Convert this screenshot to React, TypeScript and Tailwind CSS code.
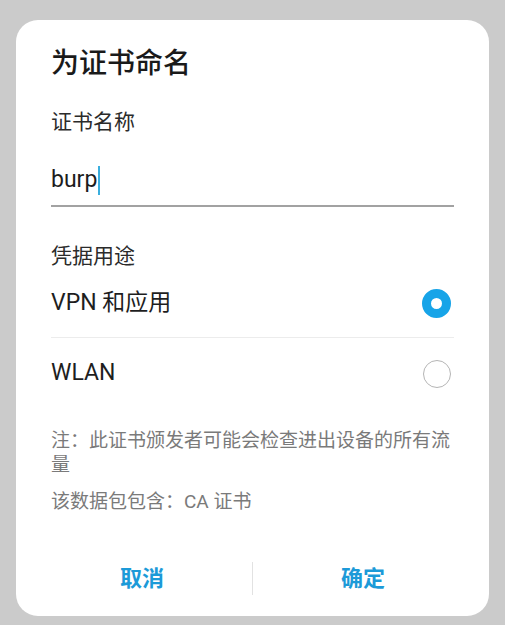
import { useState } from "react";

const font = "font-['Roboto','Noto_Sans_CJK_SC',sans-serif]";

const usages = [
    { id: "vpn", label: "VPN 和应用" },
    { id: "wlan", label: "WLAN" },
];

function Radio({ checked }: { checked: boolean }) {
    return checked ? (
        <span className="block w-[29px] h-[29px] rounded-full border-[9px] border-[#17a4e8] bg-white" />
    ) : (
        <span className="block w-[28px] h-[28px] rounded-full border-[1.5px] border-[#b5b5b5] bg-white" />
    );
}

export default function App() {
    const [usage, setUsage] = useState("vpn");

    return (
        <div className={`h-[625px] w-[505px] bg-[#cbcbcb] pt-[20px] px-[16px] ${font}`}>
            <div className="bg-white rounded-[22px] pb-[10px]">
                <div className="px-[35px] pt-[26px]">
                    <h1 className="text-[28px] leading-[36px] font-medium text-[#1a1a1a]">为证书命名</h1>

                    <p className="mt-[26px] text-[21px] leading-[28px] text-[#2b2b2b]">证书名称</p>

                    <div className="mt-[24px] h-[47px] pb-[5px] border-b-2 border-[#a2a2a2] flex items-center">
                        <span className="text-[23px] leading-[40px] text-[#1c1c1c]">burp</span>
                        <span className="ml-[1px] w-[2px] h-[29px] bg-[#3aaede]" />
                    </div>

                    <p className="mt-[35px] text-[21px] leading-[28px] text-[#2b2b2b]">凭据用途</p>

                    <div>
                        {usages.map((u, i) => (
                            <button
                                key={u.id}
                                onClick={() => setUsage(u.id)}
                                className={`w-full flex items-center justify-between text-left ${i === 0 ? "h-[68px] border-b border-[#ececec]" : "h-[71px]"}`}
                            >
                                <span className="text-[23px] text-[#1e1e1e]">{u.label}</span>
                                <span className="mr-[3px]">
                                    <Radio checked={usage === u.id} />
                                </span>
                            </button>
                        ))}
                    </div>

                    <p className="mt-[20px] text-[19px] leading-[24px] text-[#7a7a7a]">
                        注：此证书颁发者可能会检查进出设备的所有流量
                    </p>
                    <p className="mt-[13px] text-[19px] leading-[24px] text-[#7a7a7a]">该数据包包含：CA 证书</p>
                </div>

                <div className="mt-[36px] px-[16px] h-[56px] flex items-center">
                    <button className="flex-1 text-[22px] font-bold text-[#1c9ad8]">取消</button>
                    <span className="w-px h-[33px] bg-[#e2e2e2]" />
                    <button className="flex-1 text-[22px] font-bold text-[#1c9ad8]">确定</button>
                </div>
            </div>
        </div>
    );
}
